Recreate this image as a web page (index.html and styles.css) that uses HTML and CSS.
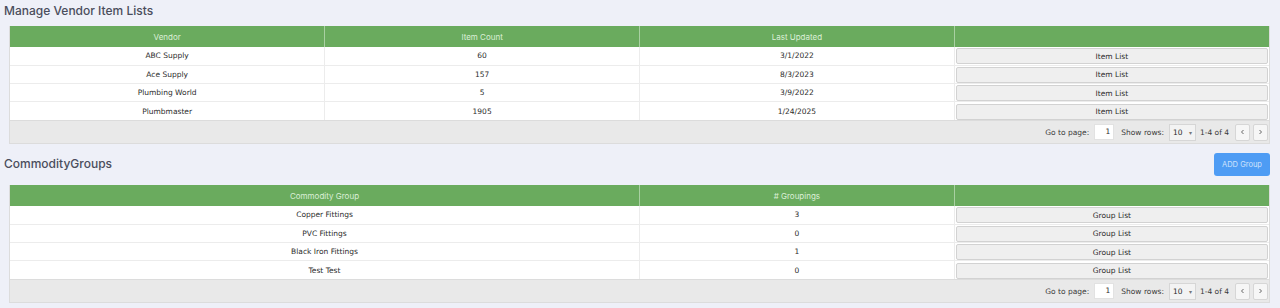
FILE: index.html
```html
<!DOCTYPE html>
<html>
<head>
<meta charset="utf-8">
<link rel="stylesheet" href="styles.css">
</head>
<body>
<div class="page">
  <h2 class="title title-first">Manage Vendor Item Lists</h2>
  <div class="grid-wrap">
    <table class="grid">
      <colgroup><col class="c4"><col class="c4"><col class="c4"><col class="c4"></colgroup>
      <thead>
        <tr><th>Vendor</th><th>Item Count</th><th>Last Updated</th><th></th></tr>
      </thead>
      <tbody>
        <tr><td>ABC Supply</td><td>60</td><td>3/1/2022</td><td class="btn-cell"><button class="cell-btn">Item List</button></td></tr>
        <tr><td>Ace Supply</td><td>157</td><td>8/3/2023</td><td class="btn-cell"><button class="cell-btn">Item List</button></td></tr>
        <tr><td>Plumbing World</td><td>5</td><td>3/9/2022</td><td class="btn-cell"><button class="cell-btn">Item List</button></td></tr>
        <tr><td>Plumbmaster</td><td>1905</td><td>1/24/2025</td><td class="btn-cell"><button class="cell-btn">Item List</button></td></tr>
      </tbody>
    </table>
    <div class="pager">
      <span class="pager-label">Go to page:</span>
      <span class="page-input">1</span>
      <span class="pager-label">Show rows:</span>
      <span class="rows-select">10 <span class="caret">▾</span></span>
      <span class="pager-count">1-4 of 4</span>
      <span class="nav-btn"><svg width="5" height="6" viewBox="0 0 5 6"><path d="M3.5 1 L1.5 3 L3.5 5" fill="none" stroke="#666" stroke-width="1"/></svg></span>
      <span class="nav-btn"><svg width="5" height="6" viewBox="0 0 5 6"><path d="M1.5 1 L3.5 3 L1.5 5" fill="none" stroke="#666" stroke-width="1"/></svg></span>
    </div>
  </div>

  <div class="section-head">
    <h2 class="title">CommodityGroups</h2>
    <button class="add-btn">ADD Group</button>
  </div>
  <div class="grid-wrap">
    <table class="grid">
      <colgroup><col class="c2"><col class="c4"><col class="c4"></colgroup>
      <thead>
        <tr><th>Commodity Group</th><th># Groupings</th><th></th></tr>
      </thead>
      <tbody>
        <tr><td>Copper Fittings</td><td>3</td><td class="btn-cell"><button class="cell-btn">Group List</button></td></tr>
        <tr><td>PVC Fittings</td><td>0</td><td class="btn-cell"><button class="cell-btn">Group List</button></td></tr>
        <tr><td>Black Iron Fittings</td><td>1</td><td class="btn-cell"><button class="cell-btn">Group List</button></td></tr>
        <tr><td>Test Test</td><td>0</td><td class="btn-cell"><button class="cell-btn">Group List</button></td></tr>
      </tbody>
    </table>
    <div class="pager">
      <span class="pager-label">Go to page:</span>
      <span class="page-input">1</span>
      <span class="pager-label">Show rows:</span>
      <span class="rows-select">10 <span class="caret">▾</span></span>
      <span class="pager-count">1-4 of 4</span>
      <span class="nav-btn"><svg width="5" height="6" viewBox="0 0 5 6"><path d="M3.5 1 L1.5 3 L3.5 5" fill="none" stroke="#666" stroke-width="1"/></svg></span>
      <span class="nav-btn"><svg width="5" height="6" viewBox="0 0 5 6"><path d="M1.5 1 L3.5 3 L1.5 5" fill="none" stroke="#666" stroke-width="1"/></svg></span>
    </div>
  </div>
</div>
</body>
</html>
```

FILE: styles.css
```css
* { box-sizing: border-box; }

html, body {
  margin: 0;
  padding: 0;
  background: #eef0f8;
}

.page {
  padding: 0 10px 0 9px;
}

.title {
  margin: 0 0 0 -5px;
  font-family: "Inter", "Open Sans", sans-serif;
  font-weight: 500;
  font-size: 12px;
  letter-spacing: 0;
  color: #4a4d5c;
}

.title-first {
  height: 26px;
  line-height: 22px;
}

.grid-wrap {
  border: 1px solid #dcdcdc;
  border-top: none;
  background: #e9e9e9;
}

.grid {
  width: 100%;
  border-collapse: collapse;
  table-layout: fixed;
  font-family: "DejaVu Sans", Verdana, sans-serif;
  font-size: 7.5px;
  color: #2b2b2b;
}

.c4 { width: 25%; }
.c2 { width: 50%; }

.grid th {
  background: #6aab5e;
  color: #dcefd7;
  font-family: "Inter", "Open Sans", sans-serif;
  font-weight: 400;
  font-size: 8px;
  height: 21px;
  padding: 0;
  border-left: 1px solid #a9d0a2;
}

.grid th:first-child { border-left: none; }

.grid td {
  background: #ffffff;
  height: 18.25px;
  padding: 0;
  text-align: center;
  border-top: 1px solid #ececec;
  border-left: 1px solid #ececec;
}

.grid td:first-child { border-left: none; }
.grid tbody tr:first-child td { border-top: none; }

.grid td.btn-cell {
  padding: 1px 1px 0 1px;
  background: #ffffff;
}

.cell-btn {
  display: block;
  width: 100%;
  height: 16px;
  margin: 0;
  padding: 0;
  border: 1px solid #d2d2d2;
  border-radius: 2px;
  background: #efefef;
  font-family: "DejaVu Sans", Verdana, sans-serif;
  font-size: 7.5px;
  color: #2b2b2b;
}

.pager {
  display: flex;
  justify-content: flex-end;
  align-items: center;
  height: 23px;
  padding: 0 1px 0 0;
  border-top: 1px solid #dcdcdc;
  font-family: "DejaVu Sans", Verdana, sans-serif;
  font-size: 7.5px;
  color: #3a3a3a;
}

.pager-label { margin-right: 5px; }

.page-input {
  width: 20px;
  height: 16px;
  background: #ffffff;
  border: 1px solid #e2e2e2;
  text-align: right;
  padding-right: 3px;
  line-height: 14px;
  margin-right: 7px;
  color: #2b2b2b;
}

.rows-select {
  display: inline-flex;
  align-items: center;
  justify-content: space-between;
  width: 27px;
  height: 17px;
  border: 1px solid #d6d6d6;
  background: #f3f3f3;
  padding: 0 3px;
  margin-right: 4px;
  color: #2b2b2b;
}

.caret {
  font-size: 6px;
  color: #777;
}

.pager-count { margin-right: 3px; }

.nav-btn {
  display: inline-flex;
  align-items: center;
  justify-content: center;
  width: 15px;
  height: 17px;
  border: 1px solid #d6d6d6;
  border-radius: 2px;
  background: #f6f6f6;
  margin-left: 3px;
}

.section-head {
  display: flex;
  justify-content: space-between;
  align-items: center;
  height: 41px;
}

.section-head .title {
  line-height: 16px;
  margin-top: -1px;
}

.add-btn {
  width: 56px;
  height: 23px;
  border: none;
  border-radius: 3px;
  background: #4e9cf4;
  color: #cfe3fc;
  font-family: "Inter", "Open Sans", sans-serif;
  font-size: 7.5px;
  padding: 0;
}
```
